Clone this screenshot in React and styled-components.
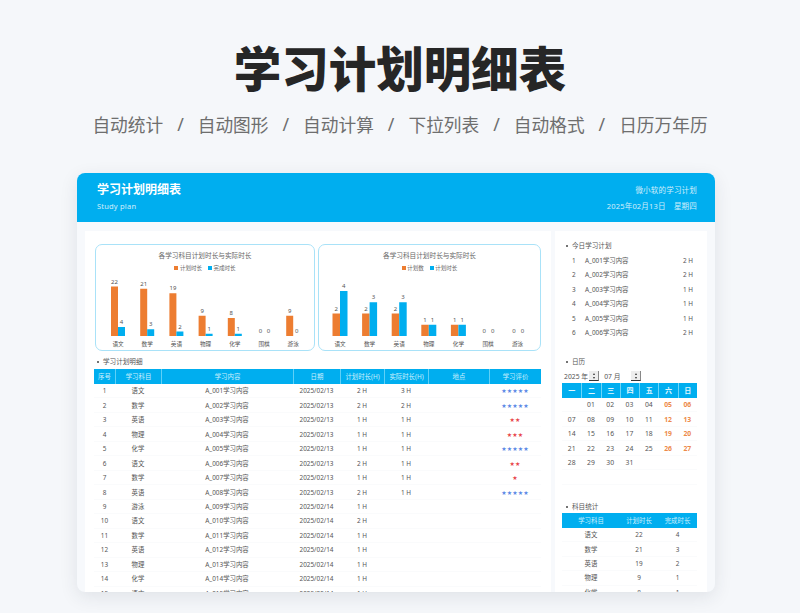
import React from "react";
import styled, { createGlobalStyle } from "styled-components";

const FONT = `"Noto Sans", "Noto Sans CJK SC", sans-serif`;
const BLUE = "#00aeef";
const ORANGE = "#ed7d31";

const GlobalStyle = createGlobalStyle`
  html, body { margin: 0; padding: 0; background: #f5f7fa; }
  body { font-family: ${FONT}; }
`;

const subjects = ["语文", "数学", "英语", "物理", "化学", "围棋", "游泳"];
const features = ["自动统计", "自动图形", "自动计算", "下拉列表", "自动格式", "日历万年历"];

const planRows = [
  [1, "语文", "2025/02/13", "2 H", "3 H", 5],
  [2, "数学", "2025/02/13", "2 H", "2 H", 5],
  [3, "英语", "2025/02/13", "1 H", "1 H", 2],
  [4, "物理", "2025/02/13", "1 H", "1 H", 3],
  [5, "化学", "2025/02/13", "1 H", "1 H", 5],
  [6, "语文", "2025/02/13", "2 H", "1 H", 2],
  [7, "数学", "2025/02/13", "1 H", "1 H", 1],
  [8, "英语", "2025/02/13", "2 H", "1 H", 5],
  [9, "游泳", "2025/02/14", "1 H", "", 0],
  [10, "语文", "2025/02/14", "2 H", "", 0],
  [11, "数学", "2025/02/14", "1 H", "", 0],
  [12, "英语", "2025/02/14", "1 H", "", 0],
  [13, "物理", "2025/02/14", "1 H", "", 0],
  [14, "化学", "2025/02/14", "1 H", "", 0],
  [15, "语文", "2025/02/14", "1 H", "", 0],
];

const todayRows = [
  [1, "A_001学习内容", "2 H"],
  [2, "A_002学习内容", "2 H"],
  [3, "A_003学习内容", "1 H"],
  [4, "A_004学习内容", "1 H"],
  [5, "A_005学习内容", "1 H"],
  [6, "A_006学习内容", "2 H"],
];

const statRows = [
  ["语文", 22, 4],
  ["数学", 21, 3],
  ["英语", 19, 2],
  ["物理", 9, 1],
  ["化学", 8, 1],
];

const calendar = [
  ["", "01", "02", "03", "04", "05", "06"],
  ["07", "08", "09", "10", "11", "12", "13"],
  ["14", "15", "16", "17", "18", "19", "20"],
  ["21", "22", "23", "24", "25", "26", "27"],
  ["28", "29", "30", "31", "", "", ""],
  ["", "", "", "", "", "", ""],
];

const PLAN_COLS = "21px 46px 132px 47px 44px 44px 61px 52px";

const Page = styled.div`
  width: 800px;
  height: 613px;
  overflow: hidden;
  display: flex;
  flex-direction: column;
  background: #f5f7fa;
`;

const Title = styled.h1`
  margin: 41px 0 0;
  height: 56px;
  line-height: 56px;
  text-align: center;
  font-size: 47.5px;
  font-weight: 900;
  color: #262626;
`;

const Features = styled.div`
  margin-top: 15px;
  height: 24px;
  display: flex;
  justify-content: center;
  align-items: center;
  gap: 14px;
  font-size: 17.7px;
  color: #6e6e6e;
`;

const Card = styled.div`
  margin: 37px 0 0 77px;
  width: 638px;
  height: 419px;
  border-radius: 8px;
  overflow: hidden;
  flex: none;
  display: flex;
  flex-direction: column;
  background: #f7f9fc;
  box-shadow: 0 5px 18px rgba(40, 50, 70, 0.1);
`;

const Banner = styled.header`
  height: 49px;
  flex: none;
  box-sizing: border-box;
  background: ${BLUE};
  color: #fff;
  padding: 9px 18px 0 20px;
  display: flex;
  justify-content: space-between;
`;

const BannerSide = styled.div`
  display: flex;
  flex-direction: column;
  align-items: ${(p) => (p.$right ? "flex-end" : "flex-start")};
`;

const BannerTitle = styled.div`
  height: 16px;
  line-height: 16px;
  font-size: 12px;
  font-weight: 700;
`;

const BannerSmall = styled.div`
  height: 16px;
  line-height: 16px;
  font-size: 7.5px;
  letter-spacing: 0.2px;
  opacity: 0.8;
  word-spacing: ${(p) => p.$wordGap || 0}px;
`;

const Body = styled.div`
  flex: 1;
  min-height: 0;
  padding: 9px 8px 0;
  display: flex;
  gap: 4px;
`;

const MainPanel = styled.main`
  width: 466px;
  background: #fff;
  padding: 13px 0 0 10px;
  box-sizing: border-box;
`;

const SidePanel = styled.aside`
  width: 152px;
  background: #fff;
  padding: 9px 0 0 8px;
  box-sizing: border-box;
`;

const Charts = styled.div`
  display: flex;
  gap: 3px;
`;

const ChartCard = styled.section`
  width: ${(p) => p.$width}px;
  height: 107px;
  box-sizing: border-box;
  border: 1px solid #a9e2f8;
  border-radius: 7px;
  display: flex;
  flex-direction: column;
  align-items: center;
`;

const ChartTitle = styled.div`
  margin-top: 5px;
  height: 11px;
  line-height: 11px;
  font-size: 6.65px;
  color: #666;
`;

const Legend = styled.div`
  margin-top: 3px;
  height: 10px;
  display: flex;
  align-items: center;
  gap: 6px;
  font-size: 5.5px;
  color: #666;
`;

const LegendItem = styled.span`
  display: flex;
  align-items: center;
  gap: 1.5px;
  &::before {
    content: "";
    width: 4px;
    height: 4px;
    background: ${(p) => p.$color};
  }
`;

const ChartSvg = styled.svg`
  display: block;
  flex: none;
  text {
    font-family: ${FONT};
    fill: #555;
    text-anchor: middle;
  }
`;

const SectionTitle = styled.h2`
  margin: 0;
  height: 12px;
  line-height: 12px;
  font-size: 6.6px;
  font-weight: 400;
  color: #555;
  padding-left: 3px;
  display: flex;
  align-items: center;
  gap: 4px;
  &::before {
    content: "";
    width: 2px;
    height: 2px;
    border-radius: 50%;
    background: #444;
  }
`;

const PlanSection = styled.section`
  margin-top: 5px;
  margin-left: -1px;
`;

const TableHead = styled.div`
  display: grid;
  grid-template-columns: ${(p) => p.$cols};
  width: fit-content;
  height: 15px;
  margin-top: ${(p) => p.$gap || 0}px;
  background: ${BLUE};
`;

const HeadCell = styled.div`
  display: flex;
  align-items: center;
  justify-content: center;
  font-size: 6.4px;
  color: #cdf0fd;
  border-left: ${(p) => (p.$first ? "0" : "1px solid #5fd0f7")};
`;

const TableRow = styled.div`
  display: grid;
  grid-template-columns: ${(p) => p.$cols};
  width: fit-content;
  height: 14.47px;
  border-bottom: 1px solid #fafbfc;
  box-sizing: border-box;
`;

const Cell = styled.div`
  display: flex;
  align-items: center;
  justify-content: center;
  font-size: 6.4px;
  color: #555;
  white-space: nowrap;
`;

const Stars = styled.span`
  font-size: 6px;
  letter-spacing: 0.1px;
  color: ${(p) => p.$color};
  font-family: "DejaVu Sans", sans-serif;
`;

const TodayList = styled.div`
  margin-top: 1px;
`;

const TodayRow = styled.div`
  height: 14.47px;
  display: grid;
  grid-template-columns: 16px 1fr auto;
  align-items: center;
  padding-left: 6px;
  width: 124px;
  font-size: 6.4px;
  color: #555;
  & > span:first-child {
    padding-left: 3px;
  }
`;

const CalendarSection = styled.section`
  margin-top: 16px;
`;

const MonthBar = styled.div`
  height: 13px;
  margin-top: 2px;
  display: flex;
  align-items: center;
  font-size: 6.8px;
  color: #555;
  padding-left: 1px;
`;

const Spinner = styled.span`
  width: 10px;
  height: 10px;
  margin: ${(p) => p.$margin};
  display: flex;
  flex-direction: column;
  align-items: center;
  justify-content: space-around;
  background: #eeeeee;
  border-bottom: 1px solid #333;
  border-right: 1px solid #888;
  box-sizing: border-box;
  &::before,
  &::after {
    content: "";
    width: 0;
    height: 0;
    border-left: 1.5px solid transparent;
    border-right: 1.5px solid transparent;
  }
  &::before {
    border-bottom: 2px solid #333;
  }
  &::after {
    border-top: 2px solid #333;
  }
`;

const CalHead = styled.div`
  width: 135px;
  display: grid;
  grid-template-columns: repeat(7, 1fr);
  height: 15px;
  margin-left: -1px;
  background: ${BLUE};
`;

const CalHeadCell = styled.div`
  display: flex;
  align-items: center;
  justify-content: center;
  font-size: 7px;
  font-weight: 700;
  color: #e3f7fe;
  border-left: ${(p) => (p.$first ? "0" : "1px solid #6ed5f8")};
`;

const CalRow = styled.div`
  width: 135px;
  margin-left: -1px;
  display: grid;
  grid-template-columns: repeat(7, 1fr);
  height: 14.5px;
  border-bottom: 1px solid #fafbfc;
  box-sizing: border-box;
`;

const CalCell = styled.div`
  display: flex;
  align-items: center;
  justify-content: center;
  font-size: 6.8px;
  font-weight: ${(p) => (p.$weekend ? 700 : 400)};
  color: ${(p) => (p.$weekend ? "#ed8a4a" : "#555")};
`;

const StatSection = styled.section`
  margin-top: 16px;
`;

const StatWrap = styled.div`
  width: 135px;
  margin-left: -1px;
`;

const STAT_COLS = "58px 38px 39px";

const Stat = ({ color, children }) => <LegendItem $color={color}>{children}</LegendItem>;

const BarChart = ({ width, data, scale, start, step, bar }) => (
  <ChartSvg width={width} height={78} viewBox={`0 0 ${width} 78`}>
    {data.map(([a, b], i) => {
      const c = start + step * i;
      const base = 64;
      return (
        <g key={subjects[i]}>
          {a > 0 && <rect x={c - bar} y={base - a * scale} width={bar} height={a * scale} fill={ORANGE} />}
          {b > 0 && <rect x={c} y={base - b * scale} width={bar} height={b * scale} fill={BLUE} />}
          <text x={c - bar / 2} y={base - a * scale - 3} fontSize="6">{a}</text>
          <text x={c + bar / 2 + (a === 0 ? 1 : 0)} y={base - b * scale - 3} fontSize="6">{b}</text>
          <text x={c} y={74} fontSize="5.6">{subjects[i]}</text>
        </g>
      );
    })}
  </ChartSvg>
);

const leftData = [[22, 4], [21, 3], [19, 2], [9, 1], [8, 1], [0, 0], [9, 0]];
const rightData = [[2, 4], [2, 3], [2, 3], [1, 1], [1, 1], [0, 0], [0, 0]];

export default function App() {
  return (
    <Page>
      <GlobalStyle />
      <Title>学习计划明细表</Title>
      <Features>
        {features.map((f, i) => (
          <React.Fragment key={f}>
            {i > 0 && <span>/</span>}
            <span>{f}</span>
          </React.Fragment>
        ))}
      </Features>
      <Card>
        <Banner>
          <BannerSide>
            <BannerTitle>学习计划明细表</BannerTitle>
            <BannerSmall>Study plan</BannerSmall>
          </BannerSide>
          <BannerSide $right>
            <BannerSmall>微小软的学习计划</BannerSmall>
            <BannerSmall $wordGap={6}>2025年02月13日 星期四</BannerSmall>
          </BannerSide>
        </Banner>
        <Body>
          <MainPanel>
            <Charts>
              <ChartCard $width={220}>
                <ChartTitle>各学习科目计划时长与实际时长</ChartTitle>
                <Legend>
                  <Stat color={ORANGE}>计划时长</Stat>
                  <Stat color={BLUE}>完成时长</Stat>
                </Legend>
                <BarChart width={218} data={leftData} scale={2.25} start={22} step={29.2} bar={7} />
              </ChartCard>
              <ChartCard $width={223}>
                <ChartTitle>各学习科目计划时长与实际时长</ChartTitle>
                <Legend>
                  <Stat color={ORANGE}>计划数</Stat>
                  <Stat color={BLUE}>计划时长</Stat>
                </Legend>
                <BarChart width={221} data={rightData} scale={11.25} start={21} step={29.6} bar={7.5} />
              </ChartCard>
            </Charts>
            <PlanSection>
              <SectionTitle>学习计划明细</SectionTitle>
              <TableHead $cols={PLAN_COLS} $gap={1}>
                {["序号", "学习科目", "学习内容", "日期", "计划时长(H)", "实际时长(H)", "地点", "学习评价"].map((h, i) => (
                  <HeadCell key={h} $first={i === 0}>{h}</HeadCell>
                ))}
              </TableHead>
              {planRows.map(([no, subject, date, plan, real, stars]) => (
                <TableRow key={no} $cols={PLAN_COLS}>
                  <Cell>{no}</Cell>
                  <Cell>{subject}</Cell>
                  <Cell>{`A_${String(no).padStart(3, "0")}学习内容`}</Cell>
                  <Cell>{date}</Cell>
                  <Cell>{plan}</Cell>
                  <Cell>{real}</Cell>
                  <Cell />
                  <Cell>
                    <Stars $color={stars === 5 ? "#5b8ae6" : "#e8484c"}>{"★".repeat(stars)}</Stars>
                  </Cell>
                </TableRow>
              ))}
            </PlanSection>
          </MainPanel>
          <SidePanel>
            <SectionTitle>今日学习计划</SectionTitle>
            <TodayList>
              {todayRows.map(([no, name, hours]) => (
                <TodayRow key={no}>
                  <span>{no}</span>
                  <span>{name}</span>
                  <span>{hours}</span>
                </TodayRow>
              ))}
            </TodayList>
            <CalendarSection>
              <SectionTitle>日历</SectionTitle>
              <MonthBar>
                2025 年<Spinner $margin="0 5px 0 1px" />07 月<Spinner $margin="0 0 0 11px" />
              </MonthBar>
              <CalHead>
                {["一", "二", "三", "四", "五", "六", "日"].map((d, i) => (
                  <CalHeadCell key={d} $first={i === 0}>{d}</CalHeadCell>
                ))}
              </CalHead>
              {calendar.map((week, r) => (
                <CalRow key={r}>
                  {week.map((d, i) => (
                    <CalCell key={i} $weekend={i > 4}>{d}</CalCell>
                  ))}
                </CalRow>
              ))}
            </CalendarSection>
            <StatSection>
              <SectionTitle>科目统计</SectionTitle>
              <StatWrap>
                <TableHead $cols={STAT_COLS}>
                  {["学习科目", "计划时长", "完成时长"].map((h) => (
                    <HeadCell key={h} $first>{h}</HeadCell>
                  ))}
                </TableHead>
                {statRows.map(([name, plan, done]) => (
                  <TableRow key={name} $cols={STAT_COLS}>
                    <Cell>{name}</Cell>
                    <Cell>{plan}</Cell>
                    <Cell>{done}</Cell>
                  </TableRow>
                ))}
              </StatWrap>
            </StatSection>
          </SidePanel>
        </Body>
      </Card>
    </Page>
  );
}
